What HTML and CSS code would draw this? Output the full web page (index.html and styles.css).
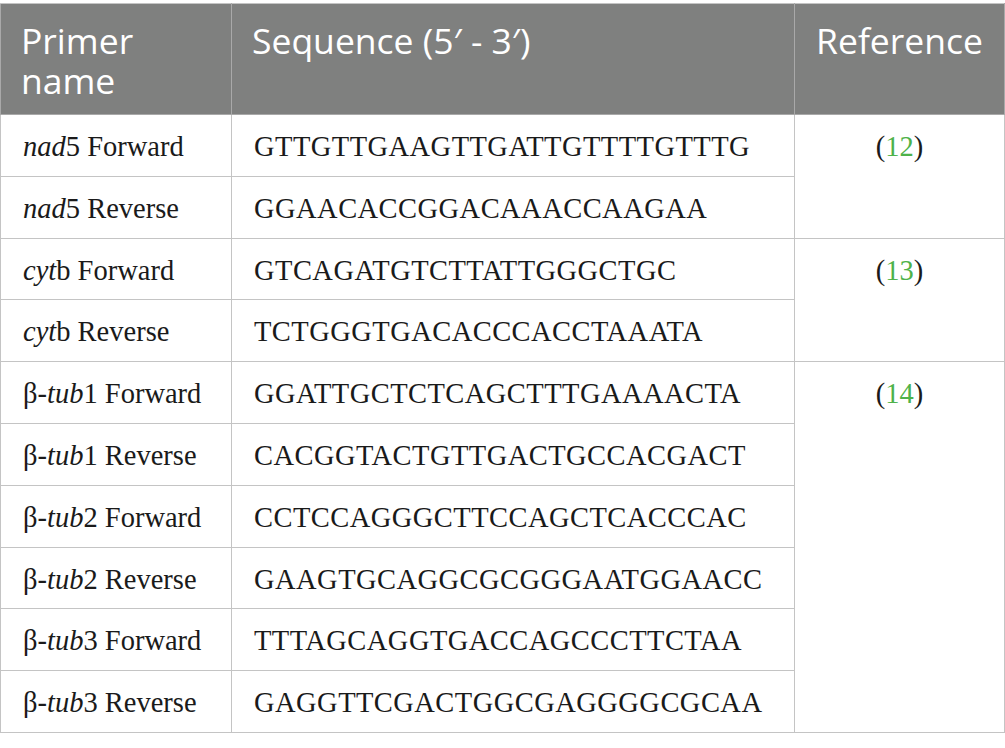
FILE: index.html
```html
<!DOCTYPE html>
<html>
<head>
<meta charset="utf-8">
<link rel="stylesheet" href="styles.css">
</head>
<body>
<table class="primers">
  <thead>
    <tr>
      <th class="c-name">Primer<br>name</th>
      <th class="c-seq">Sequence (5′ - 3′)</th>
      <th class="c-ref">Reference</th>
    </tr>
  </thead>
  <tbody>
    <tr><td><i>nad</i>5 Forward</td><td class="seq">GTTGTTGAAGTTGATTGTTTTGTTTG</td><td class="ref" rowspan="2">(<span class="cite">12</span>)</td></tr>
    <tr><td><i>nad</i>5 Reverse</td><td class="seq">GGAACACCGGACAAACCAAGAA</td></tr>
    <tr><td><i>cyt</i>b Forward</td><td class="seq">GTCAGATGTCTTATTGGGCTGC</td><td class="ref" rowspan="2">(<span class="cite">13</span>)</td></tr>
    <tr><td><i>cyt</i>b Reverse</td><td class="seq">TCTGGGTGACACCCACCTAAATA</td></tr>
    <tr><td>β-<i>tub</i>1 Forward</td><td class="seq">GGATTGCTCTCAGCTTTGAAAACTA</td><td class="ref" rowspan="6">(<span class="cite">14</span>)</td></tr>
    <tr><td>β-<i>tub</i>1 Reverse</td><td class="seq">CACGGTACTGTTGACTGCCACGACT</td></tr>
    <tr><td>β-<i>tub</i>2 Forward</td><td class="seq">CCTCCAGGGCTTCCAGCTCACCCAC</td></tr>
    <tr><td>β-<i>tub</i>2 Reverse</td><td class="seq">GAAGTGCAGGCGCGGGAATGGAACC</td></tr>
    <tr><td>β-<i>tub</i>3 Forward</td><td class="seq">TTTAGCAGGTGACCAGCCCTTCTAA</td></tr>
    <tr><td>β-<i>tub</i>3 Reverse</td><td class="seq">GAGGTTCGACTGGCGAGGGGCGCAA</td></tr>
  </tbody>
</table>
</body>
</html>
```
FILE: styles.css
```css
html, body {
  margin: 0;
  padding: 0;
  background: #ffffff;
}
body {
  padding-top: 3px;
}
.primers {
  border-collapse: collapse;
  width: 1005px;
  table-layout: fixed;
  font-family: "Liberation Serif", "Times New Roman", serif;
  color: #1a1a1a;
}
.primers th {
  background: #7f807f;
  color: #ffffff;
  font-family: "Open Sans", "Noto Sans", sans-serif;
  font-weight: 400;
  font-size: 35.5px;
  line-height: 40px;
  text-align: left;
  vertical-align: top;
  padding: 16px 16px 14px 20px;
  height: 110px;
  box-sizing: border-box;
  border: 1px solid #a9a9a9;
  border-top-color: #c4c4c4;
}
.primers th.c-name { width: 231px; }
.primers th.c-seq { width: 563px; }
.primers th.c-ref { text-align: center; padding-left: 10px; padding-right: 10px; }
.primers td {
  font-size: 28.5px;
  line-height: 36px;
  padding: 14px 10px 8px 22px;
  height: 61.8px;
  box-sizing: border-box;
  vertical-align: top;
  border: 1px solid #c4c4c4;
  white-space: nowrap;
}
.primers td.seq {
  letter-spacing: 0.45px;
}
.primers td.ref {
  text-align: center;
  padding-left: 10px;
}
.cite {
  color: #4eb24a;
}
```
